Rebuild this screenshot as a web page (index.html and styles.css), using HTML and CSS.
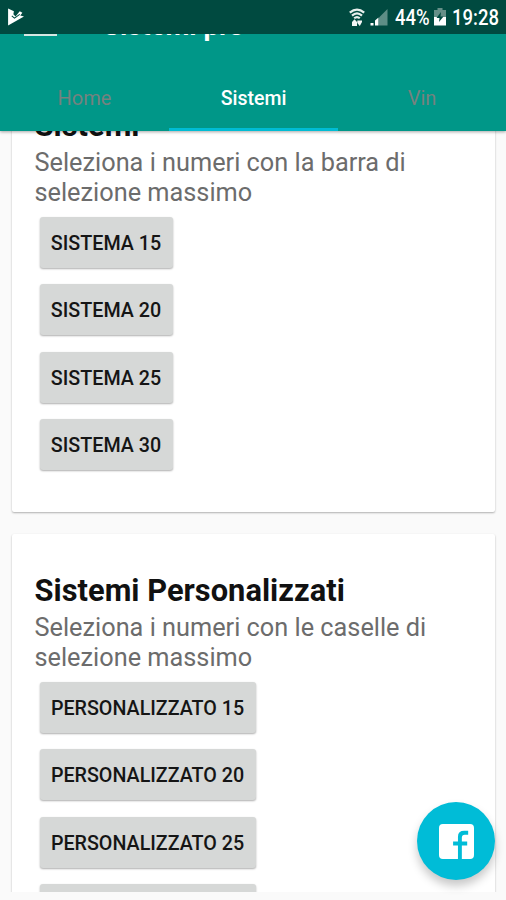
FILE: index.html
```html
<!DOCTYPE html>
<html lang="it">
<head>
<meta charset="utf-8">
<title>Sistemi pro</title>
<link rel="stylesheet" href="styles.css">
</head>
<body>
<div class="screen">
  <header class="status">
    <svg class="play" viewBox="0 0 16 17" width="17" height="18"><path d="M1 .5L6.500 3L6 6L8 8L12 3L14.500 4.500L12.500 7L16 8L1 16.500Z" fill="#fff"/><path d="M4.500 7.500L7 9.500L12 6" fill="none" stroke="#004a40" stroke-width="1"/></svg>
    <svg class="wifi" viewBox="0 0 16 19" width="16" height="19"><g fill="none" stroke="#e8efed" stroke-width="2.200"><path d="M.8 4.700Q8-1.500 15.200 4.700"/><path d="M3 7.600Q8 3.200 13 7.600"/><path d="M5.200 10.300Q8 7.800 10.800 10.300"/></g><path d="M3 18V14L5.500 11.300L8 14V18ZM8.300 12.500H13V14L10.800 18L8.300 15Z" fill="#f3f6f5"/></svg>
    <svg class="signal" viewBox="0 0 18 18" width="18" height="18"><path d="M9 9.500L17.500 1V17.500H9Z" fill="#5e8e86"/><path d="M.5 15H3.500V17.500H.5ZM5 12.500L8.500 9.500V17.500H5Z" fill="#fff"/></svg>
    <span class="percent">44%</span>
    <svg class="battery" viewBox="0 0 12 18" width="12" height="18"><path d="M3.500 0H8.500V2H12V10H0V2H3.500Z" fill="#668f88"/><path d="M0 9H12V17.500H0Z" fill="#fff"/><path d="M7 4L2.500 10H5.500L5 14L9.500 8.500H6.500Z" fill="#004a40"/></svg>
    <span class="clock">19:28</span>
  </header>
  <div class="appbar">
    <div class="toolbar"><span class="burger"></span><span class="app-title">Sistemi pro</span></div>
    <nav class="tabs"><a class="tab">Home</a><a class="tab active">Sistemi</a><a class="tab">Vin</a></nav>
  </div>
  <main class="content">
    <section class="card first">
      <h2>Sistemi</h2>
      <p>Seleziona i numeri con la barra di<br>selezione massimo</p>
      <div class="buttons narrow"><button>SISTEMA 15</button><button>SISTEMA 20</button><button>SISTEMA 25</button><button>SISTEMA 30</button></div>
    </section>
    <section class="card">
      <h2>Sistemi Personalizzati</h2>
      <p>Seleziona i numeri con le caselle di<br>selezione massimo</p>
      <div class="buttons wide"><button>PERSONALIZZATO 15</button><button>PERSONALIZZATO 20</button><button>PERSONALIZZATO 25</button><button>PERSONALIZZATO 30</button></div>
    </section>
  </main>
  <div class="fab"><svg viewBox="0 0 36 36" width="35" height="35"><path d="M4 0H32Q36 0 36 4V32Q36 36 32 36H23.500V22H29V18H23.500V14Q23.500 11 26.500 11H30V7H26Q19.500 7 19.500 13V18H14.500V22H19.500V36H4Q0 36 0 32V4Q0 0 4 0Z" fill="#fff"/></svg></div>
</div>
</body>
</html>
```

FILE: styles.css
```css
* { box-sizing: border-box; }
body { margin: 0; background: #fafafa; font-family: Roboto, sans-serif; }
.screen { position: relative; width: 506px; height: 900px; overflow: hidden; display: flex; flex-direction: column; }
.status { flex: none; height: 34px; background: #004a40; display: flex; align-items: center; padding: 0 8px 0 7px; color: #fff; z-index: 3; }
.wifi { margin-left: auto; margin-right: 5px; }
.signal { margin-right: 7px; }
.percent, .clock { font-size: 22px; line-height: 34px; height: 32px; font-weight: 500; display: block; white-space: nowrap; transform-origin: left; }
.percent { width: 34px; transform: scaleX(.84); margin-right: 5px; }
.battery { margin-right: 6px; }
.clock { width: 46px; transform: scaleX(.84); }
.appbar { flex: none; height: 97px; background: #009788; overflow: hidden; z-index: 2; box-shadow: 0 1px 3px rgba(0,0,0,.35); display: flex; flex-direction: column; justify-content: flex-end; }
.app-title { font-size: 27.500px; line-height: 34px; font-weight: 700; color: #fff; white-space: nowrap; }
.toolbar { flex: none; height: 38px; margin-bottom: 17px; display: flex; align-items: flex-start; padding-left: 24px; }
.burger { width: 33px; height: 3px; margin: 24px 46px 0 0; background: #d5e8e3; flex: none; }
.tabs { flex: none; height: 67px; display: grid; grid-template-columns: 169px 169px 168px; }
.tab { text-align: center; font-size: 20px; line-height: 69px; color: #75827f; border-bottom: 3px solid transparent; height: 67px; }
.tab.active { color: #fff; font-weight: 500; font-size: 19.500px; border-color: #00bcd4; }
.content { flex: none; height: 761px; overflow: hidden; }
.card { margin: 22px 11px 0 12px; height: 443px; padding: 37px 22.500px; background: #fff; border-radius: 2px; box-shadow: 0 1px 2px rgba(0,0,0,.3); }
.card.first { margin-top: -62px; }
h2 { margin: 0; font-size: 30.800px; line-height: 39px; height: 40px; font-weight: 700; color: #111; white-space: nowrap; letter-spacing: .03px; }
p { margin: 2px 0 8.500px; font-size: 25.300px; line-height: 30px; color: #6c6c6c; white-space: nowrap; }
.buttons { display: flex; flex-direction: column; gap: 16.500px; padding-left: 5px; }
button { display: block; height: 51px; padding: 0; border: 0; border-radius: 3px; background: #d6d8d7; color: #151515; font: 500 19.700px/53px Roboto, sans-serif; white-space: nowrap; box-shadow: 0 1px 2px rgba(0,0,0,.32); }
.narrow button { width: 133px; }
.wide button { width: 216px; }
.fab { position: absolute; left: 417px; top: 802px; width: 78px; height: 78px; border-radius: 50%; background: #00bcd7; z-index: 4; display: flex; align-items: center; justify-content: center; box-shadow: 0 6px 10px rgba(0,0,0,.22); }
```
